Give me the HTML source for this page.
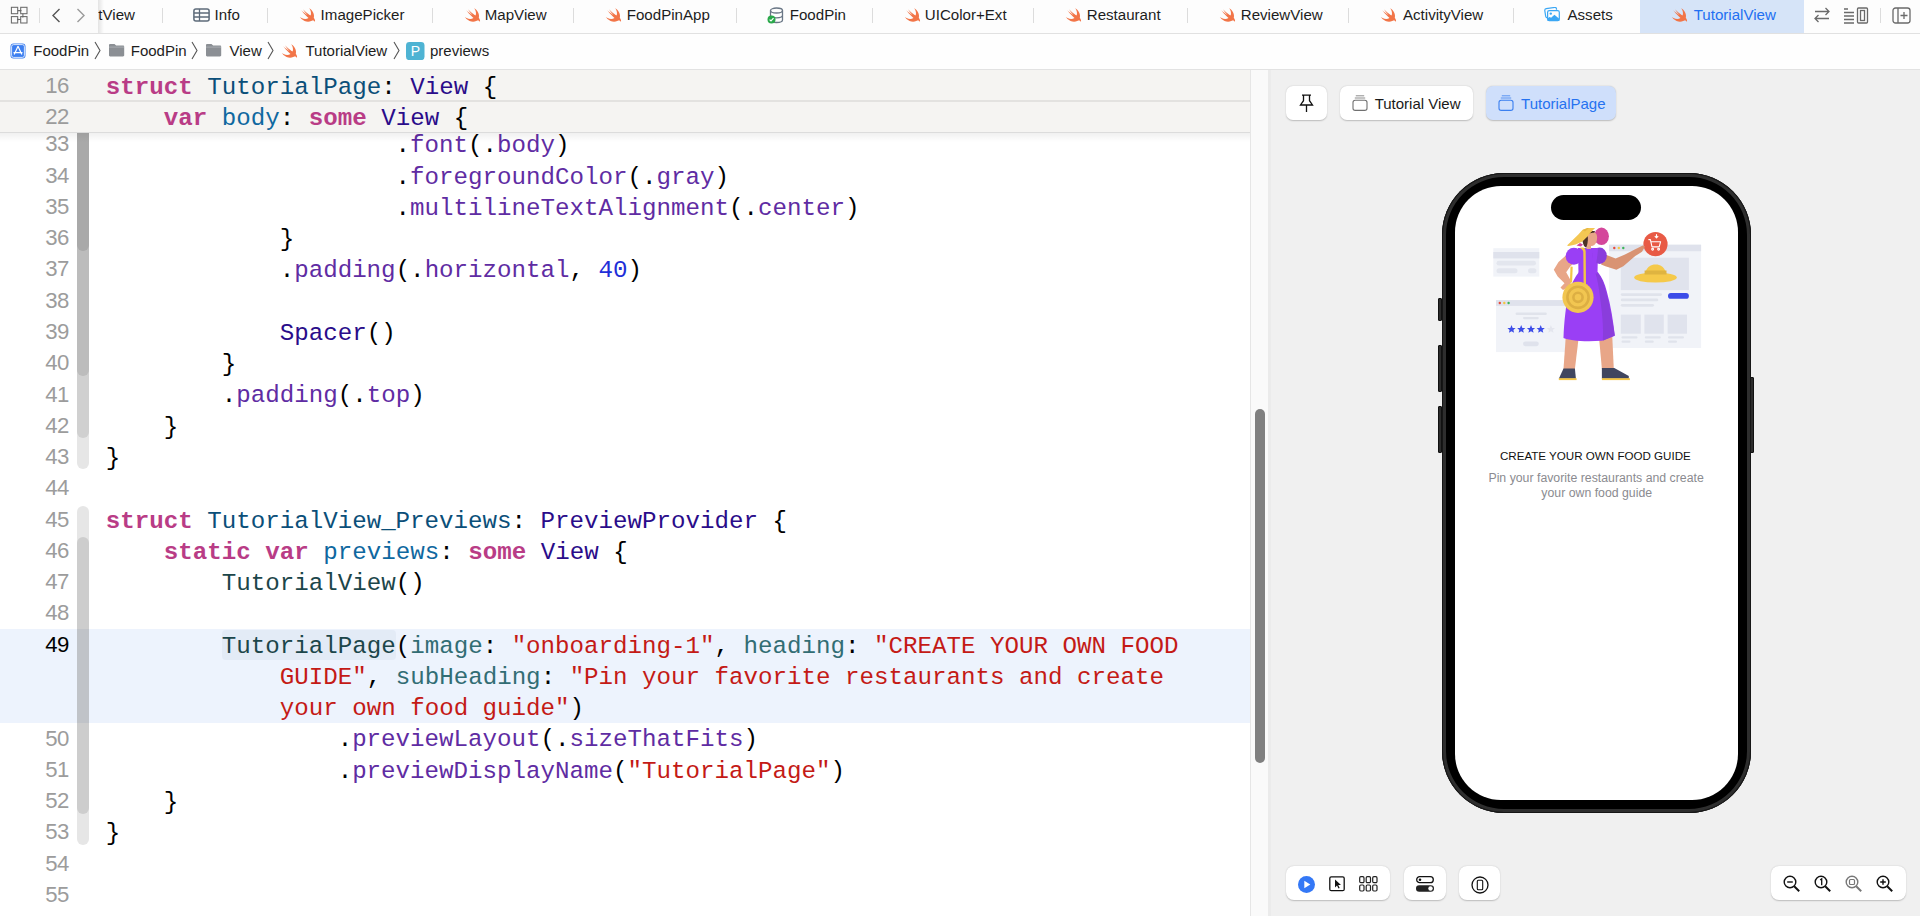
<!DOCTYPE html>
<html><head><meta charset="utf-8">
<style>
*{box-sizing:border-box}
html,body{margin:0;padding:0}
body{width:1920px;height:916px;overflow:hidden;position:relative;background:#fff;font-family:"Liberation Sans",sans-serif;color:#000}
.abs{position:absolute}
.tx{position:absolute;white-space:pre}
.ln{position:absolute;left:0;width:1250px;height:31.27px;white-space:pre}
.code{position:absolute;white-space:pre;font-family:"Liberation Mono",monospace;font-size:24.16px;line-height:24.16px;color:#000}
.num{position:absolute;white-space:pre;font-family:"Liberation Sans",sans-serif;font-size:22.2px;line-height:22.2px;letter-spacing:-0.65px;color:#9c9c9c;text-align:right;width:60px}
.k{color:#b93c86;font-weight:bold}
.td{color:#0b4f79}
.dc{color:#0f68a0}
.ty{color:#2a0c8a}
.fn{color:#5f2ca3}
.pt{color:#1c464a}
.pf{color:#326d74}
.s{color:#c41a16}
.nu{color:#1f2fd8}
</style></head><body>

<div class="abs" style="left:0px;top:0px;width:1920px;height:33px;background:#fdfdfd"></div>
<div class="abs" style="left:0px;top:33px;width:1920px;height:1px;background:#e1e1e1"></div>
<div class="tx" style="left:98.34px;top:6.82px;font-size:15.1px;line-height:15.1px;color:#1d1d1d;font-family:"Liberation Sans",sans-serif;font-weight:normal;">tView</div>
<div class="abs" style="left:162px;top:8px;width:1px;height:15px;background:#dcdcdc"></div>
<div class="abs" style="left:267px;top:8px;width:1px;height:15px;background:#dcdcdc"></div>
<div class="abs" style="left:432px;top:8px;width:1px;height:15px;background:#dcdcdc"></div>
<div class="abs" style="left:573px;top:8px;width:1px;height:15px;background:#dcdcdc"></div>
<div class="abs" style="left:736px;top:8px;width:1px;height:15px;background:#dcdcdc"></div>
<div class="abs" style="left:872px;top:8px;width:1px;height:15px;background:#dcdcdc"></div>
<div class="abs" style="left:1033px;top:8px;width:1px;height:15px;background:#dcdcdc"></div>
<div class="abs" style="left:1187px;top:8px;width:1px;height:15px;background:#dcdcdc"></div>
<div class="abs" style="left:1348px;top:8px;width:1px;height:15px;background:#dcdcdc"></div>
<div class="abs" style="left:1513px;top:8px;width:1px;height:15px;background:#dcdcdc"></div>
<div class="abs" style="left:1640px;top:0px;width:164px;height:33px;background:#d6e4f8"></div>
<div class="tx" style="left:214.61px;top:6.82px;font-size:15.1px;line-height:15.1px;color:#1d1d1d;font-family:"Liberation Sans",sans-serif;font-weight:normal;">Info</div>
<svg class="abs" style="left:193px;top:8px;" width="17" height="14" viewBox="0 0 17 14"><rect x="0.9" y="0.9" width="15.2" height="12.2" rx="2" fill="none" stroke="#5d6b7a" stroke-width="1.5"/><path d="M1 5h15M1 9h15M6.5 1v12" stroke="#5d6b7a" stroke-width="1.3"/></svg>
<div class="tx" style="left:320.61px;top:6.82px;font-size:15.1px;line-height:15.1px;color:#1d1d1d;font-family:"Liberation Sans",sans-serif;font-weight:normal;">ImagePicker</div>
<svg class="abs" style="left:299px;top:8.2px;overflow:visible" width="16.5" height="14" viewBox="1.5 3.2 19.5 16.6"><path fill="#f27548" d="M13.543 3.41c4.114 2.47 6.545 7.162 5.549 11.131-.024.093-.05.181-.076.272l.002.001c2.062 2.538 1.5 5.258 1.236 4.745-1.072-2.086-3.066-1.568-4.088-1.043a6.803 6.803 0 0 1-.281.158l-.02.012-.002.002c-2.115 1.123-4.957 1.205-7.812-.022a12.568 12.568 0 0 1-5.64-4.838c.649.48 1.35.902 2.097 1.252 3.019 1.414 6.051 1.311 8.197-.002C9.651 12.73 7.101 9.67 5.146 7.191a10.628 10.628 0 0 1-1.005-1.384c2.34 2.142 6.038 4.83 7.365 5.576C8.69 8.408 6.208 4.743 6.324 4.86c4.436 4.47 8.528 6.996 8.528 6.996.154.085.27.154.36.213.085-.215.16-.437.224-.668.708-2.588-.09-5.548-1.893-7.992z"/></svg>
<div class="tx" style="left:484.76px;top:6.82px;font-size:15.1px;line-height:15.1px;color:#1d1d1d;font-family:"Liberation Sans",sans-serif;font-weight:normal;">MapView</div>
<svg class="abs" style="left:463.5px;top:8.2px;overflow:visible" width="16.5" height="14" viewBox="1.5 3.2 19.5 16.6"><path fill="#f27548" d="M13.543 3.41c4.114 2.47 6.545 7.162 5.549 11.131-.024.093-.05.181-.076.272l.002.001c2.062 2.538 1.5 5.258 1.236 4.745-1.072-2.086-3.066-1.568-4.088-1.043a6.803 6.803 0 0 1-.281.158l-.02.012-.002.002c-2.115 1.123-4.957 1.205-7.812-.022a12.568 12.568 0 0 1-5.64-4.838c.649.48 1.35.902 2.097 1.252 3.019 1.414 6.051 1.311 8.197-.002C9.651 12.73 7.101 9.67 5.146 7.191a10.628 10.628 0 0 1-1.005-1.384c2.34 2.142 6.038 4.83 7.365 5.576C8.69 8.408 6.208 4.743 6.324 4.86c4.436 4.47 8.528 6.996 8.528 6.996.154.085.27.154.36.213.085-.215.16-.437.224-.668.708-2.588-.09-5.548-1.893-7.992z"/></svg>
<div class="tx" style="left:626.76px;top:6.82px;font-size:15.1px;line-height:15.1px;color:#1d1d1d;font-family:"Liberation Sans",sans-serif;font-weight:normal;">FoodPinApp</div>
<svg class="abs" style="left:605px;top:8.2px;overflow:visible" width="16.5" height="14" viewBox="1.5 3.2 19.5 16.6"><path fill="#f27548" d="M13.543 3.41c4.114 2.47 6.545 7.162 5.549 11.131-.024.093-.05.181-.076.272l.002.001c2.062 2.538 1.5 5.258 1.236 4.745-1.072-2.086-3.066-1.568-4.088-1.043a6.803 6.803 0 0 1-.281.158l-.02.012-.002.002c-2.115 1.123-4.957 1.205-7.812-.022a12.568 12.568 0 0 1-5.64-4.838c.649.48 1.35.902 2.097 1.252 3.019 1.414 6.051 1.311 8.197-.002C9.651 12.73 7.101 9.67 5.146 7.191a10.628 10.628 0 0 1-1.005-1.384c2.34 2.142 6.038 4.83 7.365 5.576C8.69 8.408 6.208 4.743 6.324 4.86c4.436 4.47 8.528 6.996 8.528 6.996.154.085.27.154.36.213.085-.215.16-.437.224-.668.708-2.588-.09-5.548-1.893-7.992z"/></svg>
<div class="tx" style="left:789.76px;top:6.82px;font-size:15.1px;line-height:15.1px;color:#1d1d1d;font-family:"Liberation Sans",sans-serif;font-weight:normal;">FoodPin</div>
<svg class="abs" style="left:767px;top:7px;" width="17" height="17" viewBox="0 0 17 17"><ellipse cx="9.5" cy="3.5" rx="6" ry="2.5" fill="none" stroke="#6a7786" stroke-width="1.3"/><path d="M3.5 3.5v9.5c0 1.4 2.7 2.5 6 2.5s6-1.1 6-2.5V3.5M3.5 8.3c0 1.4 2.7 2.5 6 2.5s6-1.1 6-2.5" fill="none" stroke="#6a7786" stroke-width="1.3"/><circle cx="4.5" cy="12.5" r="4" fill="#2aa84a"/><path d="M2.6 12.6l1.4 1.4 2.5-2.8" fill="none" stroke="#fff" stroke-width="1.2"/></svg>
<div class="tx" style="left:924.84px;top:6.82px;font-size:15.1px;line-height:15.1px;color:#1d1d1d;font-family:"Liberation Sans",sans-serif;font-weight:normal;">UIColor+Ext</div>
<svg class="abs" style="left:903.5px;top:8.2px;overflow:visible" width="16.5" height="14" viewBox="1.5 3.2 19.5 16.6"><path fill="#f27548" d="M13.543 3.41c4.114 2.47 6.545 7.162 5.549 11.131-.024.093-.05.181-.076.272l.002.001c2.062 2.538 1.5 5.258 1.236 4.745-1.072-2.086-3.066-1.568-4.088-1.043a6.803 6.803 0 0 1-.281.158l-.02.012-.002.002c-2.115 1.123-4.957 1.205-7.812-.022a12.568 12.568 0 0 1-5.64-4.838c.649.48 1.35.902 2.097 1.252 3.019 1.414 6.051 1.311 8.197-.002C9.651 12.73 7.101 9.67 5.146 7.191a10.628 10.628 0 0 1-1.005-1.384c2.34 2.142 6.038 4.83 7.365 5.576C8.69 8.408 6.208 4.743 6.324 4.86c4.436 4.47 8.528 6.996 8.528 6.996.154.085.27.154.36.213.085-.215.16-.437.224-.668.708-2.588-.09-5.548-1.893-7.992z"/></svg>
<div class="tx" style="left:1086.76px;top:6.82px;font-size:15.1px;line-height:15.1px;color:#1d1d1d;font-family:"Liberation Sans",sans-serif;font-weight:normal;">Restaurant</div>
<svg class="abs" style="left:1065px;top:8.2px;overflow:visible" width="16.5" height="14" viewBox="1.5 3.2 19.5 16.6"><path fill="#f27548" d="M13.543 3.41c4.114 2.47 6.545 7.162 5.549 11.131-.024.093-.05.181-.076.272l.002.001c2.062 2.538 1.5 5.258 1.236 4.745-1.072-2.086-3.066-1.568-4.088-1.043a6.803 6.803 0 0 1-.281.158l-.02.012-.002.002c-2.115 1.123-4.957 1.205-7.812-.022a12.568 12.568 0 0 1-5.64-4.838c.649.48 1.35.902 2.097 1.252 3.019 1.414 6.051 1.311 8.197-.002C9.651 12.73 7.101 9.67 5.146 7.191a10.628 10.628 0 0 1-1.005-1.384c2.34 2.142 6.038 4.83 7.365 5.576C8.69 8.408 6.208 4.743 6.324 4.86c4.436 4.47 8.528 6.996 8.528 6.996.154.085.27.154.36.213.085-.215.16-.437.224-.668.708-2.588-.09-5.548-1.893-7.992z"/></svg>
<div class="tx" style="left:1240.76px;top:6.82px;font-size:15.1px;line-height:15.1px;color:#1d1d1d;font-family:"Liberation Sans",sans-serif;font-weight:normal;">ReviewView</div>
<svg class="abs" style="left:1219px;top:8.2px;overflow:visible" width="16.5" height="14" viewBox="1.5 3.2 19.5 16.6"><path fill="#f27548" d="M13.543 3.41c4.114 2.47 6.545 7.162 5.549 11.131-.024.093-.05.181-.076.272l.002.001c2.062 2.538 1.5 5.258 1.236 4.745-1.072-2.086-3.066-1.568-4.088-1.043a6.803 6.803 0 0 1-.281.158l-.02.012-.002.002c-2.115 1.123-4.957 1.205-7.812-.022a12.568 12.568 0 0 1-5.64-4.838c.649.48 1.35.902 2.097 1.252 3.019 1.414 6.051 1.311 8.197-.002C9.651 12.73 7.101 9.67 5.146 7.191a10.628 10.628 0 0 1-1.005-1.384c2.34 2.142 6.038 4.83 7.365 5.576C8.69 8.408 6.208 4.743 6.324 4.86c4.436 4.47 8.528 6.996 8.528 6.996.154.085.27.154.36.213.085-.215.16-.437.224-.668.708-2.588-.09-5.548-1.893-7.992z"/></svg>
<div class="tx" style="left:1402.97px;top:6.82px;font-size:15.1px;line-height:15.1px;color:#1d1d1d;font-family:"Liberation Sans",sans-serif;font-weight:normal;">ActivityView</div>
<svg class="abs" style="left:1380px;top:8.2px;overflow:visible" width="16.5" height="14" viewBox="1.5 3.2 19.5 16.6"><path fill="#f27548" d="M13.543 3.41c4.114 2.47 6.545 7.162 5.549 11.131-.024.093-.05.181-.076.272l.002.001c2.062 2.538 1.5 5.258 1.236 4.745-1.072-2.086-3.066-1.568-4.088-1.043a6.803 6.803 0 0 1-.281.158l-.02.012-.002.002c-2.115 1.123-4.957 1.205-7.812-.022a12.568 12.568 0 0 1-5.64-4.838c.649.48 1.35.902 2.097 1.252 3.019 1.414 6.051 1.311 8.197-.002C9.651 12.73 7.101 9.67 5.146 7.191a10.628 10.628 0 0 1-1.005-1.384c2.34 2.142 6.038 4.83 7.365 5.576C8.69 8.408 6.208 4.743 6.324 4.86c4.436 4.47 8.528 6.996 8.528 6.996.154.085.27.154.36.213.085-.215.16-.437.224-.668.708-2.588-.09-5.548-1.893-7.992z"/></svg>
<div class="tx" style="left:1567.47px;top:6.82px;font-size:15.1px;line-height:15.1px;color:#1d1d1d;font-family:"Liberation Sans",sans-serif;font-weight:normal;">Assets</div>
<svg class="abs" style="left:1543px;top:7px;" width="19" height="16" viewBox="0 0 19 16"><g fill="none" stroke="#3ba7f4" stroke-width="1.2"><path d="M4.5 10.8c-.9 0-1.6-.6-1.8-1.5L1.8 3.6c-.1-.9.5-1.7 1.4-1.9l8.5-1.3c.9-.1 1.7.5 1.8 1.4V2.7"/><rect x="4.6" y="3.7" width="11.7" height="10" rx="1.6"/></g><path d="M4.6 13.2v-2l2-1.2 1.5 .8 3.3-3 4.9 4v1.6c0 .4-.3.7-.7.7H5.3c-.4 0-.7-.3-.7-.7z" fill="#3ba7f4"/><circle cx="7.8" cy="6.6" r="1.2" fill="#3ba7f4"/></svg>
<svg class="abs" style="left:1671px;top:8.2px;overflow:visible" width="16.5" height="14" viewBox="1.5 3.2 19.5 16.6"><path fill="#f27548" d="M13.543 3.41c4.114 2.47 6.545 7.162 5.549 11.131-.024.093-.05.181-.076.272l.002.001c2.062 2.538 1.5 5.258 1.236 4.745-1.072-2.086-3.066-1.568-4.088-1.043a6.803 6.803 0 0 1-.281.158l-.02.012-.002.002c-2.115 1.123-4.957 1.205-7.812-.022a12.568 12.568 0 0 1-5.64-4.838c.649.48 1.35.902 2.097 1.252 3.019 1.414 6.051 1.311 8.197-.002C9.651 12.73 7.101 9.67 5.146 7.191a10.628 10.628 0 0 1-1.005-1.384c2.34 2.142 6.038 4.83 7.365 5.576C8.69 8.408 6.208 4.743 6.324 4.86c4.436 4.47 8.528 6.996 8.528 6.996.154.085.27.154.36.213.085-.215.16-.437.224-.668.708-2.588-.09-5.548-1.893-7.992z"/></svg>
<div class="tx" style="left:1693.66px;top:6.82px;font-size:15.1px;line-height:15.1px;color:#2270f2;font-family:"Liberation Sans",sans-serif;font-weight:normal;">TutorialView</div>
<div class="abs" style="left:0px;top:0px;width:98px;height:33px;background:#fbfbfb"></div>
<div class="abs" style="left:98px;top:0px;width:6px;height:33px;background:linear-gradient(90deg,rgba(0,0,0,.10),rgba(0,0,0,0))"></div>
<svg class="abs" style="left:10px;top:6px;" width="18" height="18" viewBox="0 0 18 18"><g fill="none" stroke="#6a6a6a" stroke-width="1.05"><rect x="1.4" y="1.3" width="6.3" height="6.4"/><rect x="10.7" y="1.3" width="6.3" height="6.4"/><rect x="1.4" y="10.6" width="6.3" height="6.4"/><rect x="10.7" y="10.6" width="6.3" height="6.4"/><path d="M7.7 4.6h3.5M12.9 7.7v3.6M10.7 13.5H7.2"/></g><path d="M10.2 3.5l1.5 1.1-1.5 1.1zM11.9 10.1l1 1.6 1-1.6zM8.2 12.3l-1.5 1.2 1.5 1.1z" fill="#6a6a6a"/></svg>
<div class="abs" style="left:39px;top:7.5px;width:1px;height:15px;background:#dedede"></div>
<svg class="abs" style="left:51px;top:7.5px;" width="10" height="15" viewBox="0 0 10 15"><path d="M8.5 1L2 7.5 8.5 14" fill="none" stroke="#555" stroke-width="1.4"/></svg>
<svg class="abs" style="left:76px;top:7.5px;" width="10" height="15" viewBox="0 0 10 15"><path d="M1.5 1L8 7.5 1.5 14" fill="none" stroke="#9a9a9a" stroke-width="1.4"/></svg>
<svg class="abs" style="left:1813px;top:7px;" width="18" height="16" viewBox="0 0 18 16"><g fill="none" stroke="#6a6a6a" stroke-width="1.3"><path d="M2 4.5h14M12.5 1l3.5 3.5-3.5 3.5M16 11.5H2M5.5 8L2 11.5 5.5 15"/></g></svg>
<svg class="abs" style="left:1843px;top:6.5px;" width="26" height="17" viewBox="0 0 26 17"><g fill="none" stroke="#6a6a6a" stroke-width="1.3"><path d="M1 2h4M1 5.5h10M1 9h10M1 12.5h10M1 16h10"/><rect x="14.5" y="1" width="10" height="15" rx="1"/><rect x="17.5" y="3.5" width="4" height="10"/></g></svg>
<div class="abs" style="left:1880px;top:8px;width:1px;height:15px;background:#dcdcdc"></div>
<svg class="abs" style="left:1892px;top:6.5px;" width="19" height="17" viewBox="0 0 19 17"><g fill="none" stroke="#6a6a6a" stroke-width="1.3"><rect x="1" y="1" width="17" height="15" rx="2.5"/><path d="M6 1v15M12 5v7M8.5 8.5h7"/></g></svg>
<div class="abs" style="left:0px;top:34px;width:1920px;height:35px;background:#fefefe"></div>
<div class="abs" style="left:0px;top:69px;width:1920px;height:1px;background:#e2e2e2"></div>
<svg class="abs" style="left:10px;top:43px;" width="16" height="16" viewBox="0 0 16 16"><rect x="0.5" y="0.5" width="15" height="15" rx="3" fill="#3d7ff0"/><rect x="1.6" y="1.6" width="12.8" height="12.8" rx="2" fill="none" stroke="#fff" stroke-width="0.8"/><path d="M8 3.3L4.2 11.5M8 3.3l3.8 8.2M3.5 9.6h9" stroke="#fff" stroke-width="1.2" fill="none"/></svg>
<div class="tx" style="left:33.27px;top:43.10px;font-size:15.0px;line-height:15.0px;color:#1d1d1d;font-family:"Liberation Sans",sans-serif;font-weight:normal;">FoodPin</div>
<svg class="abs" style="left:93.5px;top:40.6px;" width="7" height="19" viewBox="0 0 7 19"><path d="M1 1l5 8.5L1 18" fill="none" stroke="#555" stroke-width="1.1"/></svg>
<svg class="abs" style="left:107.5px;top:43.2px;" width="17" height="14" viewBox="0 0 17 14"><path d="M1 2.2C1 1.5 1.5 1 2.2 1h4.3l1.6 1.6h6.9c.7 0 1.2.5 1.2 1.2v8.5c0 .7-.5 1.2-1.2 1.2H2.2c-.7 0-1.2-.5-1.2-1.2z" fill="#8b8f94"/><rect x="1" y="3.6" width="15" height="1" fill="#a9adb1"/></svg>
<div class="tx" style="left:130.77px;top:43.10px;font-size:15.0px;line-height:15.0px;color:#1d1d1d;font-family:"Liberation Sans",sans-serif;font-weight:normal;">FoodPin</div>
<svg class="abs" style="left:191px;top:40.6px;" width="7" height="19" viewBox="0 0 7 19"><path d="M1 1l5 8.5L1 18" fill="none" stroke="#555" stroke-width="1.1"/></svg>
<svg class="abs" style="left:205px;top:43.2px;" width="17" height="14" viewBox="0 0 17 14"><path d="M1 2.2C1 1.5 1.5 1 2.2 1h4.3l1.6 1.6h6.9c.7 0 1.2.5 1.2 1.2v8.5c0 .7-.5 1.2-1.2 1.2H2.2c-.7 0-1.2-.5-1.2-1.2z" fill="#8b8f94"/><rect x="1" y="3.6" width="15" height="1" fill="#a9adb1"/></svg>
<div class="tx" style="left:229.53px;top:43.10px;font-size:15.0px;line-height:15.0px;color:#1d1d1d;font-family:"Liberation Sans",sans-serif;font-weight:normal;">View</div>
<svg class="abs" style="left:267px;top:40.6px;" width="7" height="19" viewBox="0 0 7 19"><path d="M1 1l5 8.5L1 18" fill="none" stroke="#555" stroke-width="1.1"/></svg>
<svg class="abs" style="left:281px;top:44px;overflow:visible" width="16.5" height="14" viewBox="1.5 3.2 19.5 16.6"><path fill="#f27548" d="M13.543 3.41c4.114 2.47 6.545 7.162 5.549 11.131-.024.093-.05.181-.076.272l.002.001c2.062 2.538 1.5 5.258 1.236 4.745-1.072-2.086-3.066-1.568-4.088-1.043a6.803 6.803 0 0 1-.281.158l-.02.012-.002.002c-2.115 1.123-4.957 1.205-7.812-.022a12.568 12.568 0 0 1-5.64-4.838c.649.48 1.35.902 2.097 1.252 3.019 1.414 6.051 1.311 8.197-.002C9.651 12.73 7.101 9.67 5.146 7.191a10.628 10.628 0 0 1-1.005-1.384c2.34 2.142 6.038 4.83 7.365 5.576C8.69 8.408 6.208 4.743 6.324 4.86c4.436 4.47 8.528 6.996 8.528 6.996.154.085.27.154.36.213.085-.215.16-.437.224-.668.708-2.588-.09-5.548-1.893-7.992z"/></svg>
<div class="tx" style="left:305.46px;top:43.10px;font-size:15.0px;line-height:15.0px;color:#1d1d1d;font-family:"Liberation Sans",sans-serif;font-weight:normal;">TutorialView</div>
<svg class="abs" style="left:393px;top:40.6px;" width="7" height="19" viewBox="0 0 7 19"><path d="M1 1l5 8.5L1 18" fill="none" stroke="#555" stroke-width="1.1"/></svg>
<svg class="abs" style="left:406px;top:41.6px;" width="19" height="18.4" viewBox="0 0 19 18.4"><rect x="0" y="0" width="18.5" height="18.2" rx="3.5" fill="#4eb3d3"/><text x="9.5" y="14.3" font-family="Liberation Sans" font-size="14" fill="#fff" text-anchor="middle">P</text></svg>
<div class="tx" style="left:430.03px;top:43.10px;font-size:15.0px;line-height:15.0px;color:#1d1d1d;font-family:"Liberation Sans",sans-serif;font-weight:normal;">previews</div>
<div class="abs" style="left:0px;top:629.12px;width:1250px;height:93.81px;background:#edf3fd"></div>
<div class="abs" style="left:77px;top:118.80px;width:11.5px;height:350.20px;background:#e6e6e6;border-radius:0 0 6px 6px"></div>
<div class="abs" style="left:77px;top:118.80px;width:11.5px;height:319.20px;background:#d0d0d0;border-radius:0 0 6px 6px"></div>
<div class="abs" style="left:77px;top:118.80px;width:11.5px;height:257.20px;background:#bcbcbc;border-radius:0 0 6px 6px"></div>
<div class="abs" style="left:77px;top:118.80px;width:11.5px;height:132.20px;background:#a9a9a9;border-radius:0 0 6px 6px"></div>
<div class="abs" style="left:77px;top:505.54px;width:11.5px;height:339.47px;background:#e6e6e6;border-radius:6px"></div>
<div class="abs" style="left:77px;top:536.81px;width:11.5px;height:276.93px;background:#cdcdcd;border-radius:6px"></div>
<div class="abs" style="left:77px;top:629.12px;width:11.5px;height:93.81px;background:rgba(80,110,160,0.10)"></div>
<div class="abs" style="left:221.5px;top:629.92px;width:174px;height:30.2px;background:rgba(120,140,170,0.08);border-radius:4px"></div>
<div class="code" style="left:105.70px;top:134.29px">                    .<span class="fn">font</span>(.<span class="fn">body</span>)</div>
<div class="num" style="left:8.75px;top:133.40px;">33</div>
<div class="code" style="left:105.70px;top:165.56px">                    .<span class="fn">foregroundColor</span>(.<span class="fn">gray</span>)</div>
<div class="num" style="left:8.75px;top:164.67px;">34</div>
<div class="code" style="left:105.70px;top:196.83px">                    .<span class="fn">multilineTextAlignment</span>(.<span class="fn">center</span>)</div>
<div class="num" style="left:8.75px;top:195.94px;">35</div>
<div class="code" style="left:105.70px;top:228.10px">            }</div>
<div class="num" style="left:8.75px;top:227.21px;">36</div>
<div class="code" style="left:105.70px;top:259.37px">            .<span class="fn">padding</span>(.<span class="fn">horizontal</span>, <span class="nu">40</span>)</div>
<div class="num" style="left:8.75px;top:258.48px;">37</div>
<div class="code" style="left:105.70px;top:290.64px"></div>
<div class="num" style="left:8.75px;top:289.75px;">38</div>
<div class="code" style="left:105.70px;top:321.91px">            <span class="ty">Spacer</span>()</div>
<div class="num" style="left:8.75px;top:321.02px;">39</div>
<div class="code" style="left:105.70px;top:353.18px">        }</div>
<div class="num" style="left:8.75px;top:352.29px;">40</div>
<div class="code" style="left:105.70px;top:384.45px">        .<span class="fn">padding</span>(.<span class="fn">top</span>)</div>
<div class="num" style="left:8.75px;top:383.56px;">41</div>
<div class="code" style="left:105.70px;top:415.72px">    }</div>
<div class="num" style="left:8.75px;top:414.83px;">42</div>
<div class="code" style="left:105.70px;top:446.99px">}</div>
<div class="num" style="left:8.75px;top:446.10px;">43</div>
<div class="code" style="left:105.70px;top:478.26px"></div>
<div class="num" style="left:8.75px;top:477.37px;">44</div>
<div class="code" style="left:105.70px;top:509.53px"><span class="k">struct</span> <span class="td">TutorialView_Previews</span>: <span class="ty">PreviewProvider</span> {</div>
<div class="num" style="left:8.75px;top:508.64px;">45</div>
<div class="code" style="left:105.70px;top:540.80px">    <span class="k">static</span> <span class="k">var</span> <span class="dc">previews</span>: <span class="k">some</span> <span class="ty">View</span> {</div>
<div class="num" style="left:8.75px;top:539.91px;">46</div>
<div class="code" style="left:105.70px;top:572.07px">        <span class="pt">TutorialView</span>()</div>
<div class="num" style="left:8.75px;top:571.18px;">47</div>
<div class="code" style="left:105.70px;top:603.34px"></div>
<div class="num" style="left:8.75px;top:602.45px;">48</div>
<div class="code" style="left:105.70px;top:634.61px">        <span class="pt">TutorialPage</span>(<span class="pf">image</span>: <span class="s">"onboarding-1"</span>, <span class="pf">heading</span>: <span class="s">"CREATE YOUR OWN FOOD</span></div>
<div class="code" style="left:279.68px;top:665.88px"><span class="s">GUIDE"</span>, <span class="pf">subHeading</span>: <span class="s">"Pin your favorite restaurants and create</span></div>
<div class="code" style="left:279.68px;top:697.15px"><span class="s">your own food guide"</span>)</div>
<div class="num" style="left:8.75px;top:633.72px;color:#000;">49</div>
<div class="code" style="left:105.70px;top:728.42px">                .<span class="fn">previewLayout</span>(.<span class="fn">sizeThatFits</span>)</div>
<div class="num" style="left:8.75px;top:727.53px;">50</div>
<div class="code" style="left:105.70px;top:759.69px">                .<span class="fn">previewDisplayName</span>(<span class="s">"TutorialPage"</span>)</div>
<div class="num" style="left:8.75px;top:758.80px;">51</div>
<div class="code" style="left:105.70px;top:790.96px">    }</div>
<div class="num" style="left:8.75px;top:790.07px;">52</div>
<div class="code" style="left:105.70px;top:822.23px">}</div>
<div class="num" style="left:8.75px;top:821.34px;">53</div>
<div class="code" style="left:105.70px;top:853.50px"></div>
<div class="num" style="left:8.75px;top:852.61px;">54</div>
<div class="code" style="left:105.70px;top:884.77px"></div>
<div class="num" style="left:8.75px;top:883.88px;">55</div>
<div class="abs" style="left:0px;top:70px;width:1250px;height:62.5px;background:#f5f4f2"></div>
<div class="abs" style="left:0px;top:100.4px;width:1250px;height:1.2px;background:#e3e2e0"></div>
<div class="abs" style="left:0px;top:131.8px;width:1250px;height:1px;background:#dcdcdc"></div>
<div class="abs" style="left:0px;top:132.8px;width:1250px;height:9px;background:linear-gradient(rgba(0,0,0,.06),rgba(0,0,0,0))"></div>
<div class="code" style="left:105.70px;top:75.59px"><span class="k">struct</span> <span class="td">TutorialPage</span>: <span class="ty">View</span> {</div>
<div class="num" style="left:8.75px;top:74.70px;">16</div>
<div class="code" style="left:105.70px;top:106.69px">    <span class="k">var</span> <span class="dc">body</span>: <span class="k">some</span> <span class="ty">View</span> {</div>
<div class="num" style="left:8.75px;top:105.80px;">22</div>
<div class="abs" style="left:1250px;top:70px;width:1px;height:846px;background:#e6e6e6"></div>
<div class="abs" style="left:1251px;top:70px;width:17px;height:846px;background:#fafafa"></div>
<div class="abs" style="left:1268px;top:70px;width:3px;height:846px;background:#ebebeb"></div>
<div class="abs" style="left:1255px;top:409px;width:10px;height:354px;background:#808080;border-radius:5px"></div>
<div class="abs" style="left:1271px;top:70px;width:649px;height:846px;background:#f0f0f0"></div>
<div class="abs" style="left:1286px;top:86px;width:41px;height:34px;background:#fff;border-radius:7px;box-shadow:0 0.5px 1.5px rgba(0,0,0,.22)"></div>
<svg class="abs" style="left:1298px;top:94px;" width="17" height="19" viewBox="0 0 17 19"><g fill="none" stroke="#111" stroke-width="1.3"><path d="M4 1.2h9M5.5 1.2v5.5L2.5 11h12l-3-4.3V1.2M8.5 11v7"/></g></svg>
<div class="abs" style="left:1340.4px;top:86px;width:133px;height:34px;background:#fff;border-radius:7px;box-shadow:0 0.5px 1.5px rgba(0,0,0,.22)"></div>
<svg class="abs" style="left:1351.5px;top:95px;" width="16" height="16" viewBox="0 0 16 16"><g fill="none" stroke="#707070" stroke-width="1.1"><rect x="1" y="5.2" width="14" height="10.2" rx="2.2"/><path d="M3.8 0.8h8.4M2.8 3h10.4" stroke-width="0.8"/></g></svg>
<div class="tx" style="left:1374.66px;top:95.80px;font-size:15.0px;line-height:15.0px;color:#1a1a1a;font-family:"Liberation Sans",sans-serif;font-weight:normal;">Tutorial View</div>
<div class="abs" style="left:1486px;top:86px;width:130px;height:34px;background:#cfdffb;border-radius:7px;box-shadow:0 0.5px 1.5px rgba(0,0,0,.22)"></div>
<svg class="abs" style="left:1497.5px;top:95px;" width="16" height="16" viewBox="0 0 16 16"><g fill="none" stroke="#3a7ff0" stroke-width="1.1"><rect x="1" y="5.2" width="14" height="10.2" rx="2.2"/><path d="M3.8 0.8h8.4M2.8 3h10.4" stroke-width="0.8"/></g></svg>
<div class="tx" style="left:1521.06px;top:95.80px;font-size:15.0px;line-height:15.0px;color:#2572f0;font-family:"Liberation Sans",sans-serif;font-weight:normal;">TutorialPage</div>
<div class="abs" style="left:1437.8px;top:297.8px;width:4px;height:23px;background:#2c2c2c;border:0.8px solid #111;border-radius:1px"></div>
<div class="abs" style="left:1437.8px;top:344.9px;width:4px;height:46.8px;background:#2c2c2c;border:0.8px solid #111;border-radius:1px"></div>
<div class="abs" style="left:1437.8px;top:405.8px;width:4px;height:47.2px;background:#2c2c2c;border:0.8px solid #111;border-radius:1px"></div>
<div class="abs" style="left:1750px;top:376.9px;width:3.6px;height:75.9px;background:#2c2c2c;border:0.8px solid #111;border-radius:1px"></div>
<div class="abs" style="left:1441.5px;top:172.8px;width:309.2px;height:640px;background:#000;border-radius:62px;box-shadow:inset 0 0 0 1px #161616,inset 0 0 0 4px #2e2e2e"></div>
<div class="abs" style="left:1454.7px;top:185.6px;width:283.7px;height:614.4px;background:#fff;border-radius:46px"></div>
<div class="abs" style="left:1551px;top:194.7px;width:90px;height:25.8px;background:#000;border-radius:13px"></div>
<div class="tx" style="left:1499.94px;top:450.18px;font-size:11.6px;line-height:11.6px;color:#111;font-family:"Liberation Sans",sans-serif;font-weight:bold;">CREATE YOUR OWN FOOD GUIDE</div>
<div class="tx" style="left:1488.44px;top:471.59px;font-size:12.3px;line-height:12.3px;color:#8b8b90;font-family:"Liberation Sans",sans-serif;font-weight:normal;">Pin your favorite restaurants and create</div>
<div class="tx" style="left:1541.37px;top:487.09px;font-size:12.3px;line-height:12.3px;color:#8b8b90;font-family:"Liberation Sans",sans-serif;font-weight:normal;">your own food guide</div>
<div class="abs" style="left:1286px;top:866.3px;width:104.3px;height:34px;background:#fff;border-radius:8px;box-shadow:0 0.5px 1.5px rgba(0,0,0,.22)"></div>
<svg class="abs" style="left:1298px;top:875.6px;" width="17" height="17" viewBox="0 0 17 17"><circle cx="8.5" cy="8.5" r="8.5" fill="#3478f6"/><path d="M6.3 4.8v7.4l6-3.7z" fill="#fff"/></svg>
<svg class="abs" style="left:1329.4px;top:876px;" width="16" height="15.5" viewBox="0 0 16 15.5"><rect x="0.8" y="0.8" width="14.4" height="13.9" rx="1.5" fill="none" stroke="#111" stroke-width="1.3"/><path d="M6 3.5v8l2-2 1.5 3 1.2-.6-1.5-3h2.8z" fill="#111"/></svg>
<svg class="abs" style="left:1359px;top:876px;" width="19" height="15.5" viewBox="0 0 19 15.5"><g fill="none" stroke="#222" stroke-width="1.2"><rect x="0.7" y="0.7" width="4.3" height="6" rx="1.2"/><rect x="0.7" y="9.0" width="4.3" height="6" rx="1.2"/><rect x="7.2" y="0.7" width="4.3" height="6" rx="1.2"/><rect x="7.2" y="9.0" width="4.3" height="6" rx="1.2"/><rect x="13.7" y="0.7" width="4.3" height="6" rx="1.2"/><rect x="13.7" y="9.0" width="4.3" height="6" rx="1.2"/></g></svg>
<div class="abs" style="left:1403.5px;top:866.3px;width:42px;height:34px;background:#fff;border-radius:8px;box-shadow:0 0.5px 1.5px rgba(0,0,0,.22)"></div>
<svg class="abs" style="left:1415.5px;top:876px;" width="18" height="16" viewBox="0 0 18 16"><rect x="0.7" y="0.7" width="16.6" height="6" rx="3" fill="none" stroke="#111" stroke-width="1.3"/><circle cx="4" cy="3.7" r="1.3" fill="#111"/><rect x="0" y="9.3" width="18" height="6.5" rx="3.25" fill="#222"/><circle cx="14.5" cy="12.55" r="2.2" fill="#fff"/></svg>
<div class="abs" style="left:1459px;top:866.3px;width:40.8px;height:34px;background:#fff;border-radius:8px;box-shadow:0 0.5px 1.5px rgba(0,0,0,.22)"></div>
<svg class="abs" style="left:1470.5px;top:875.5px;" width="18" height="18" viewBox="0 0 18 18"><circle cx="9" cy="9" r="8" fill="none" stroke="#111" stroke-width="1.3"/><rect x="6.3" y="4.3" width="5.4" height="9.4" rx="1" fill="none" stroke="#111" stroke-width="1.1"/></svg>
<div class="abs" style="left:1770.5px;top:866px;width:135px;height:34px;background:#fff;border-radius:8px;box-shadow:0 0.5px 1.5px rgba(0,0,0,.22)"></div>
<svg class="abs" style="left:1782.7px;top:875.3px;" width="18" height="18" viewBox="0 0 18 18"><g fill="none" stroke="#111" stroke-width="1.4"><circle cx="7" cy="7" r="5.8"/><path d="M11.2 11.2l5 5" stroke-width="2"/></g><path d="M4.2 7h5.6" stroke="#111" stroke-width="1.4"/></svg>
<svg class="abs" style="left:1814px;top:875.3px;" width="18" height="18" viewBox="0 0 18 18"><g fill="none" stroke="#111" stroke-width="1.4"><circle cx="7" cy="7" r="5.8"/><path d="M11.2 11.2l5 5" stroke-width="2"/></g><path d="M6.2 5l1.5-1.2v6.5" fill="none" stroke="#111" stroke-width="1.3"/></svg>
<svg class="abs" style="left:1845px;top:875.3px;" width="18" height="18" viewBox="0 0 18 18"><g fill="none" stroke="#777" stroke-width="1.4"><circle cx="7" cy="7" r="5.8"/><path d="M11.2 11.2l5 5" stroke-width="2"/></g><rect x="4.5" y="4.5" width="5" height="5" rx="1" fill="none" stroke="#777" stroke-width="1.2"/></svg>
<svg class="abs" style="left:1876.4px;top:875.3px;" width="18" height="18" viewBox="0 0 18 18"><g fill="none" stroke="#111" stroke-width="1.4"><circle cx="7" cy="7" r="5.8"/><path d="M11.2 11.2l5 5" stroke-width="2"/></g><path d="M4.2 7h5.6M7 4.2v5.6" stroke="#111" stroke-width="1.4"/></svg>
<svg class="abs" style="left:1480px;top:220px" width="230" height="170" viewBox="1480 220 230 170">
<!-- small card -->
<rect x="1493.3" y="248.2" width="46" height="28.4" fill="#f1f3f8"/>
<rect x="1493.3" y="252" width="46" height="6.4" fill="#dfe2ec"/>
<rect x="1496.5" y="260.8" width="39.5" height="4.7" rx="2.35" fill="#e3e6ee"/>
<rect x="1496.5" y="268.2" width="21" height="5" rx="2.5" fill="#e3e6ee"/>
<rect x="1528" y="268.2" width="8.4" height="5" rx="2.5" fill="#e3e6ee"/>
<!-- rating card -->
<rect x="1496" y="300.1" width="72" height="52" fill="#f1f3f8"/>
<rect x="1496" y="300.1" width="72" height="5.8" fill="#dfe2ec"/>
<circle cx="1499.8" cy="303" r="1.2" fill="#e74c3c"/><circle cx="1504.3" cy="303" r="1.2" fill="#f5c542"/><circle cx="1508.6" cy="303" r="1.2" fill="#3cb55a"/>
<rect x="1515.6" y="312.6" width="31.2" height="2.4" rx="1.2" fill="#e0e3eb"/>
<rect x="1523" y="317" width="15.8" height="2.2" rx="1.1" fill="#e0e3eb"/>
<g fill="#3d4de8">
<path id="st" d="M0-4.2L1.2-1.4 4.1-1.3 1.9.6 2.6 3.5 0 1.9-2.6 3.5-1.9.6-4.1-1.3-1.2-1.4z" transform="translate(1511.5 329.3)"/>
<path d="M0-4.2L1.2-1.4 4.1-1.3 1.9.6 2.6 3.5 0 1.9-2.6 3.5-1.9.6-4.1-1.3-1.2-1.4z" transform="translate(1521.2 329.3)"/>
<path d="M0-4.2L1.2-1.4 4.1-1.3 1.9.6 2.6 3.5 0 1.9-2.6 3.5-1.9.6-4.1-1.3-1.2-1.4z" transform="translate(1531 329.3)"/>
<path d="M0-4.2L1.2-1.4 4.1-1.3 1.9.6 2.6 3.5 0 1.9-2.6 3.5-1.9.6-4.1-1.3-1.2-1.4z" transform="translate(1540.7 329.3)"/>
</g>
<path d="M0-4.2L1.2-1.4 4.1-1.3 1.9.6 2.6 3.5 0 1.9-2.6 3.5-1.9.6-4.1-1.3-1.2-1.4z" transform="translate(1550.9 329.3)" fill="#e4e6ee"/>
<rect x="1523" y="341.5" width="15.8" height="4.7" rx="2.35" fill="#dfe2ec"/>
<!-- big card -->
<rect x="1609.1" y="244.7" width="92" height="103.3" fill="#f1f3f8"/>
<rect x="1609.1" y="244.7" width="92" height="6.5" fill="#dfe2ec"/>
<circle cx="1614.3" cy="248" r="1.2" fill="#e74c3c"/><circle cx="1618.8" cy="248" r="1.2" fill="#f5c542"/><circle cx="1623.3" cy="248" r="1.2" fill="#3cb55a"/>
<rect x="1620.8" y="257.7" width="68.1" height="32.4" fill="#e0e3ed"/>
<ellipse cx="1655.5" cy="277.6" rx="21.3" ry="5" fill="#f5c94a"/>
<path d="M1644.7 278.5c0-4 .6-14 10.9-14s10.9 10 10.9 14z" fill="#f5c94a"/>
<rect x="1644.6" y="270.5" width="21.9" height="4" fill="#dfb440"/>
<rect x="1620.8" y="293.2" width="41.2" height="2.8" rx="1.4" fill="#e0e3eb"/>
<rect x="1620.8" y="298.5" width="37.5" height="2.8" rx="1.4" fill="#e0e3eb"/>
<rect x="1620.8" y="303.9" width="33.2" height="2.8" rx="1.4" fill="#e0e3eb"/>
<rect x="1668" y="292.9" width="20.9" height="5.9" rx="2.9" fill="#3d4de8"/>
<rect x="1620.8" y="314.6" width="20" height="19.1" fill="#e0e3ed"/>
<rect x="1644.4" y="314.6" width="19.4" height="19.1" fill="#e0e3ed"/>
<rect x="1667.6" y="314.6" width="19.4" height="19.1" fill="#e0e3ed"/>
<g fill="#e0e3eb">
<rect x="1621.5" y="336.2" width="16" height="2.3" rx="1.1"/><rect x="1644.8" y="336.2" width="16" height="2.3" rx="1.1"/><rect x="1668" y="336.2" width="16" height="2.3" rx="1.1"/>
<rect x="1621.5" y="340.6" width="9" height="2.2" rx="1.1"/><rect x="1644.8" y="340.6" width="9" height="2.2" rx="1.1"/><rect x="1668" y="340.6" width="9" height="2.2" rx="1.1"/>
</g>
<!-- cart circle -->
<circle cx="1655.5" cy="244.1" r="12.1" fill="#e85a45"/>
<g fill="none" stroke="#fff" stroke-width="1.1" stroke-linecap="round" stroke-linejoin="round">
<path d="M1648.8 239.6h1.6l1.6 7.3h7.2l1.4-5.2h-9.4"/>
<circle cx="1652.6" cy="249.2" r="0.9"/><circle cx="1658.6" cy="249.2" r="0.9"/>
<path d="M1656.5 234.5v3.2M1655.1 236.4l1.4 1.4 1.4-1.4"/>
</g>
<!-- legs -->
<path d="M1565.6 339h12.9l-3.6 30h-11.4z" fill="#e8a688"/>
<path d="M1598.8 335h13.4l1.6 34h-11.9z" fill="#e8a688"/>
<!-- shoes -->
<path d="M1563.5 368.4h11.4l1 10.3h-17.1z" fill="#40465f"/>
<rect x="1558.8" y="378.2" width="17.8" height="1.9" fill="#f4c546"/>
<path d="M1601.9 368h12.4l14.5 8.1v2.6h-26.9z" fill="#40465f"/>
<rect x="1601.9" y="378.2" width="28" height="1.9" fill="#f4c546"/>
<!-- left arm -->
<path d="M1567 254.5L1558.5 262 1553.8 269.7 1557.7 276.5 1564.5 283.3 1560.5 287.5 1563 290 1569.6 286.7 1571.3 281.6 1566.2 272.3 1570.4 266.3 1573 264z" fill="#e8a688"/>
<!-- right arm -->
<path d="M1603.5 253.8L1615.6 258.6 1625 254.4 1635.2 249.3 1642.8 245.4 1645 246.5 1642 251.8 1635.2 256.1 1623.3 266.3 1616.4 269.7 1605.4 266.3 1601.1 264.6z" fill="#d99373"/>
<!-- skirt -->
<path d="M1579 272c-4 5-8 12-10 20-3 12-5 30-5.5 46 6 2.5 19 4 38.4 2.8l12.9-5.2c-1.5-14-4-30-8-44-2-8-5-15-9-19.6z" fill="#9a3ff5"/>
<path d="M1597 272c4 4 7 11 9 19.6 4 14 6.5 30 8.8 44.2l-12 5c1-14-1-31-3-45-1-9-2.5-17-4.5-23z" fill="#8a3ddc"/>
<!-- torso -->
<path d="M1578 248h20l-.5 25.5h-19z" fill="#9a3ff5"/>
<ellipse cx="1573.9" cy="256.2" rx="8.2" ry="8.5" fill="#9a3ff5"/>
<ellipse cx="1599.6" cy="255.8" rx="7.2" ry="8.2" fill="#8a3ddc"/>
<path d="M1592.4 248h5.6c0 4-1 10-2 17h-3.6z" fill="#9a3ff5"/>
<!-- strap -->
<path d="M1580.5 247.5l3 0c1.5 1 2.2 2.5 2.2 4l.3 33.5-2.4 0-.3-33c0-1.2-.8-2.6-2.8-3.6z" fill="#f2c546"/>
<path d="M1570.5 266.5l2.2.2-.6 15.8-2.2-.1z" fill="#f2c546"/>
<!-- bag -->
<circle cx="1578" cy="297.3" r="15.6" fill="#f2c651"/>
<circle cx="1578" cy="297.3" r="10.6" fill="none" stroke="#ddaf43" stroke-width="2.6"/>
<circle cx="1578" cy="297.3" r="4.6" fill="none" stroke="#ddaf43" stroke-width="2.6"/>
<!-- neck / head -->
<ellipse cx="1601.5" cy="236.3" rx="7.4" ry="8.7" fill="#d4479b"/>
<path d="M1576.5 245.5l3.5-2.5 3 1.5-2 2z" fill="#d4479b"/>
<rect x="1586.5" y="242" width="4.5" height="7" fill="#e8a688"/>
<path d="M1586.6 237c0-3.5 2.5-5 5.5-5 3 0 5 1.7 5 5.5 0 4-1.5 8-5 8.4-3.5.3-5.5-3.5-5.5-8.9z" fill="#e8a688"/>
<path d="M1582.4 240c1-2 3-4.5 5-5 1 3 .5 8-1 12.5-2 0-3.5-3-4-7.5z" fill="#4b3227"/>
<path d="M1588.5 232.5c1.5-1 4-1.6 6.5-1.3l-.6 1.6c-2 0-4 .4-5.4 1z" fill="#4b3227"/>
<path d="M1567 245.4L1578.1 234.8 1582.4 230.1 1587.5 228 1595.1 228 1590.9 232.2 1587.5 236.5 1582.4 241.6 1575.6 244.6 1568.7 245.9z" fill="#f4c753"/>
<path d="M1582.4 230.1L1587.5 228 1589 228 1585 231.5z" fill="#e6b843"/>
</svg>
</body></html>
